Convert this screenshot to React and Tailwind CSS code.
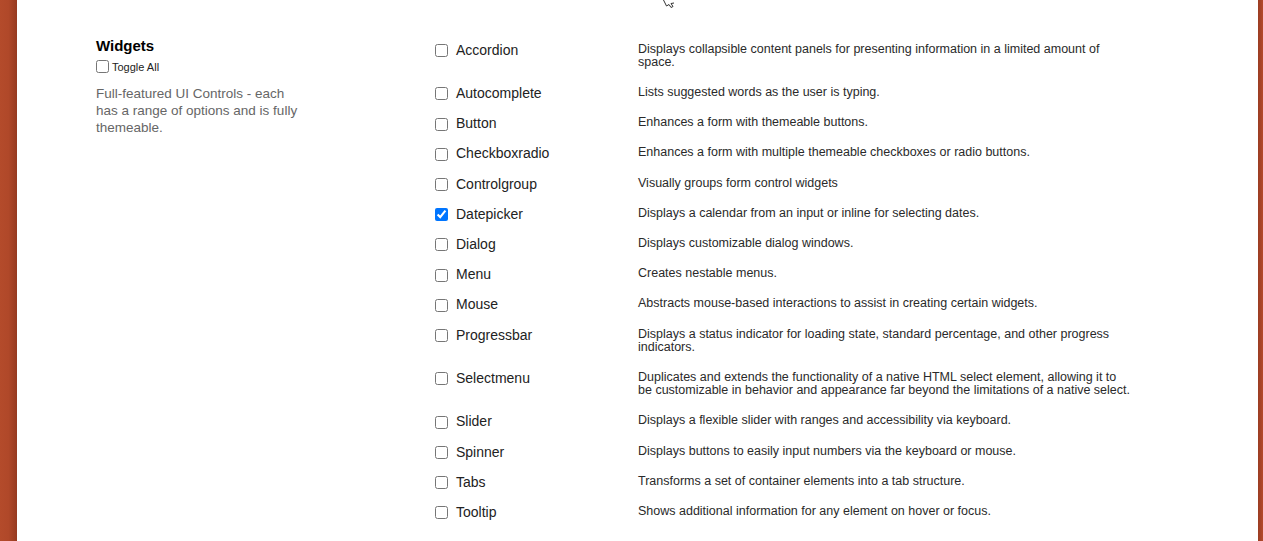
const widgets = [
  { name: 'Accordion', desc: 'Displays collapsible content panels for presenting information in a limited amount of space.' },
  { name: 'Autocomplete', desc: 'Lists suggested words as the user is typing.' },
  { name: 'Button', desc: 'Enhances a form with themeable buttons.' },
  { name: 'Checkboxradio', desc: 'Enhances a form with multiple themeable checkboxes or radio buttons.' },
  { name: 'Controlgroup', desc: 'Visually groups form control widgets' },
  { name: 'Datepicker', desc: 'Displays a calendar from an input or inline for selecting dates.', checked: true },
  { name: 'Dialog', desc: 'Displays customizable dialog windows.' },
  { name: 'Menu', desc: 'Creates nestable menus.' },
  { name: 'Mouse', desc: 'Abstracts mouse-based interactions to assist in creating certain widgets.' },
  { name: 'Progressbar', desc: 'Displays a status indicator for loading state, standard percentage, and other progress indicators.' },
  { name: 'Selectmenu', desc: 'Duplicates and extends the functionality of a native HTML select element, allowing it to be customizable in behavior and appearance far beyond the limitations of a native select.' },
  { name: 'Slider', desc: 'Displays a flexible slider with ranges and accessibility via keyboard.' },
  { name: 'Spinner', desc: 'Displays buttons to easily input numbers via the keyboard or mouse.' },
  { name: 'Tabs', desc: 'Transforms a set of container elements into a tab structure.' },
  { name: 'Tooltip', desc: 'Shows additional information for any element on hover or focus.' },
]

function WidgetRow({ name, desc, checked }) {
  return (
    <div className="flex items-start pt-[8px] pb-[9px]">
      <label className="relative top-[1px] flex items-start w-[203px] h-[13px] text-[14px] leading-[13px] text-[#222]">
        <input
          type="checkbox"
          defaultChecked={checked}
          className="m-0 mt-[0.5px] w-[13px] h-[13px] shrink-0"
        />
        <span className="ml-[8px]">{name}</span>
      </label>
      <p className="w-[492px] text-[12.5px] leading-[13.2px] text-[#2a2a2a]">{desc}</p>
    </div>
  )
}

export default function App() {
  return (
    <div
      className="relative flex h-[541px] overflow-hidden bg-white"
      style={{ fontFamily: '"Liberation Sans", Arial, sans-serif' }}
    >
      <div className="w-[17px] shrink-0 bg-gradient-to-r from-[#b44b2b] via-[#b04829] to-[#963a20]" />

      <main className="flex-1 flex pl-[79px] pt-[33px]">
        <aside className="w-[339px] shrink-0 pt-[4px]">
          <h2 className="text-[15px] leading-[18px] font-bold text-black">Widgets</h2>
          <label className="flex items-center mt-[3px] text-[11px] leading-[13px] text-[#222]">
            <input type="checkbox" className="m-0 w-[13px] h-[13px]" />
            <span className="ml-[3px] mt-[3px]">Toggle All</span>
          </label>
          <p className="mt-[11px] whitespace-nowrap text-[13.5px] leading-[17px] text-[#666]">
            Full-featured UI Controls - each
            <br />
            has a range of options and is fully
            <br />
            themeable.
          </p>
        </aside>

        <section className="flex flex-col pt-[1.5px]">
          {widgets.map((w) => (
            <WidgetRow key={w.name} {...w} />
          ))}
        </section>
      </main>

      <div className="w-[5px] shrink-0 bg-gradient-to-r from-[#9a3c22] to-[#b44b2b]" />

      {/* mouse pointer peeking in at the top */}
      <svg className="absolute left-[662px] top-0" width="14" height="8" viewBox="0 0 14 8">
        <path d="M1.5 0 L4.5 6 L7 4.5 L9 7.5 L11 6.5 L9 3.5 L12 3" fill="white" stroke="#333" strokeWidth="1" />
      </svg>
    </div>
  )
}
